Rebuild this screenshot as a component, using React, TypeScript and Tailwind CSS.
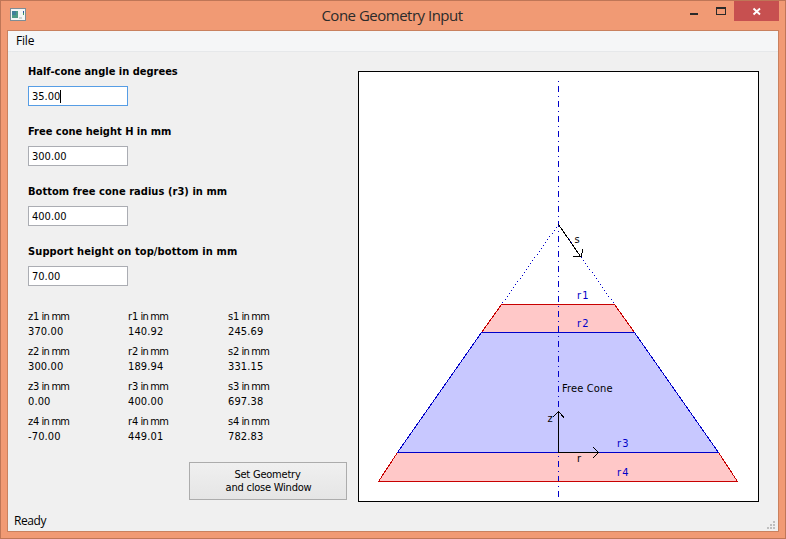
import React from "react";

const fields = [
  { label: "Half-cone angle in degrees", value: "35.00", active: true, ls: "tracking-[0px]" },
  { label: "Free cone height H in mm", value: "300.00", active: false, ls: "tracking-[0px]" },
  { label: "Bottom free cone radius (r3) in mm", value: "400.00", active: false, ls: "tracking-[0.05px]" },
  { label: "Support height on top/bottom in mm", value: "70.00", active: false, ls: "tracking-[0.11px]" },
];

const results = [
  ["z1", "370.00", "r1", "140.92", "s1", "245.69"],
  ["z2", "300.00", "r2", "189.94", "s2", "331.15"],
  ["z3", "0.00", "r3", "400.00", "s3", "697.38"],
  ["z4", "-70.00", "r4", "449.01", "s4", "782.83"],
];

// Vertical steps of the dotted slant lines between the apex and the top support.
const dots = Array.from({ length: 27 }, (_, i) => i * 3);

function AppIcon() {
  return (
    <svg width="16" height="13" viewBox="0 0 16 13" shapeRendering="crispEdges">
      <rect width="16" height="13" fill="#7d8d96" />
      <rect x="1" y="1" width="14" height="11" fill="#f4f6f6" />
      <rect x="2" y="3" width="6" height="7" fill="#4d9a86" />
      <rect x="2" y="3" width="4" height="4" fill="#3f7f9a" />
      <rect x="13" y="3" width="1" height="2" fill="#2c56a0" />
      <rect x="13" y="5" width="1" height="2" fill="#3fa060" />
      <rect x="9" y="9" width="3" height="2" fill="#cfd3d3" />
    </svg>
  );
}

function TitleBar() {
  return (
    <div className="flex h-[29px] items-start">
      <div className="w-[100px] pl-[9px] pt-[7px]"><AppIcon /></div>
      <div className="flex-1 pt-[4px] text-center font-['Open_Sans',sans-serif] text-[15px] leading-[20px] tracking-[-0.5px] text-[#2b2b2b]">
        <span className="mr-[2px]">Cone Geometry Input</span>
      </div>
      <div className="flex w-[100px] justify-end pr-[6px]">
        <svg width="50" height="20" viewBox="0 0 50 20" shapeRendering="crispEdges">
          <rect x="5" y="12" width="8" height="2" fill="#2a2a2a" />
          <path d="M32 6h10v8h-10z M33 8v5h8v-5z" fill="#2a2a2a" fillRule="evenodd" />
        </svg>
        <div className="flex h-[20px] w-[45px] items-start bg-[#c75050]">
          <svg width="45" height="20" viewBox="0 0 45 20">
            <path d="M19.5 7.5l6.5 6M26 7.5l-6.5 6" stroke="#fff" strokeWidth="1.9" />
          </svg>
        </div>
      </div>
    </div>
  );
}

function ConeDiagram() {
  return (
    <svg width="401" height="431" viewBox="358 71 401 431" className="block text-[11px]" shapeRendering="crispEdges">
      <rect x="358.5" y="71.5" width="400" height="430" fill="#fff" stroke="#000" />
      <path d="M501.500 304.500H614.500L634.500 332.500H481.500Z" fill="#ffc8c8" />
      <path d="M481.500 332.500H634.500L718.500 452.500H397.500Z" fill="#c8c8ff" />
      <path d="M397.500 452.500H718.500L737.500 481.500H378.500Z" fill="#ffc8c8" />
      <path d="M558.500 81V497" stroke="#0000c8" strokeDasharray="1 4 6 4" />
      <g fill="#0000c8">
        {dots.map((d) => (
          <React.Fragment key={d}>
            <rect x={558 - Math.round(d * 0.7125)} y={224 + d} width="1" height="1" />
            <rect x={558 + Math.round(d * 0.7)} y={224 + d} width="1" height="1" />
          </React.Fragment>
        ))}
      </g>
      <path d="M481.500 332.500L501.500 304.500H614.500L634.500 332.500M397.500 452.500L378.500 481.500H737.500L718.500 452.500" fill="none" stroke="#c80000" />
      <path d="M481.500 332.500H634.500L718.500 452.500H397.500Z" fill="none" stroke="#0000c8" />
      <g fill="none" stroke="#000">
        <path d="M558.500 224.500L580.500 256.500M573 256.500H581.500L582.500 249" />
        <path d="M558.500 452V412M552.500 417.500L558.500 411.500L564 417.500" />
        <path d="M558 452.500H598M593 447L598.500 452.500L593 458" />
      </g>
      <g fill="#0000c8">
        <text x="577" y="299" textLength="11.500">r1</text>
        <text x="577" y="327" textLength="11.500">r2</text>
        <text x="617" y="447" textLength="11.500">r3</text>
        <text x="617" y="476" textLength="11.500">r4</text>
      </g>
      <text x="562" y="392" textLength="50.500">Free Cone</text>
      <text x="574.500" y="243">s</text>
      <text x="547.500" y="422">z</text>
      <text x="577" y="462">r</text>
    </svg>
  );
}

export default function App() {
  return (
    <div className="flex h-[539px] w-[786px] flex-col border border-[#bf7657] bg-[#f19a74] font-['DejaVu_Sans_Condensed','DejaVu_Sans',sans-serif] text-[11px] text-black">
      <TitleBar />
      <div className="mx-[6px] mb-[6px] flex flex-1 flex-col border border-[#c9815f] bg-[#f0f0f0]">
        <div className="h-[21px] border-b border-[#e6e8ea] bg-[#f5f6f7] pl-[8px] font-['Open_Sans',sans-serif] text-[12px] leading-[20px] tracking-[-0.2px]">File</div>
        <div className="flex h-[458px] pl-[20px] pt-[12px]">
          <div className="w-[330px] font-stretch-condensed">
            {fields.map((f) => (
              <div key={f.label} className="h-[60px]">
                <div className={`h-[22px] whitespace-nowrap pt-px font-bold leading-[14px] ${f.ls}`}>{f.label}</div>
                <div className={`flex h-[20px] w-[100px] items-center border bg-white pl-[3px] pt-[3px] ${f.active ? "border-[#569de5]" : "border-[#abadb3]"}`}>
                  {f.value}
                  {f.active && <span className="mb-[2px] h-[13px] w-px bg-black" />}
                </div>
              </div>
            ))}
            <div className="flex flex-col gap-[5px] pt-[5px]">
              {results.map((r) => (
                <div key={r[0]} className="flex leading-[15px]">
                  {[0, 2, 4].map((i) => (
                    <div key={i} className="w-[100px]">
                      <div className="tracking-[-0.7px] [word-spacing:-0.2px]"><span className="tracking-[-0.1px]">{r[i]}</span> in mm</div>
                      <div className="tracking-[0.13px]">{r[i + 1]}</div>
                    </div>
                  ))}
                </div>
              ))}
            </div>
            <button className="ml-[161px] mt-[18px] block h-[38px] w-[158px] border border-[#acacac] bg-linear-to-b from-[#f0f0f0] to-[#e5e5e5] text-center leading-[13px] tracking-[-0.22px]">
              <span className="mr-px">Set Geometry</span><br /><span className="ml-px">and close Window</span>
            </button>
          </div>
          <div className="pt-[7px] font-stretch-condensed"><ConeDiagram /></div>
        </div>
        <div className="flex flex-1 items-start justify-between pl-[6px] font-['Open_Sans',sans-serif] text-[12px]">
          <span className="pt-px leading-[20px] tracking-[-0.4px]">Ready</span>
          <svg width="11" height="20" viewBox="0 0 11 20" shapeRendering="crispEdges" fill="#bfbfbf">
            <path d="M6 11h2v2h-2zM3 14h2v2h-2zM6 14h2v2h-2zM0 17h2v2h-2zM3 17h2v2h-2zM6 17h2v2h-2z" />
          </svg>
        </div>
      </div>
    </div>
  );
}
